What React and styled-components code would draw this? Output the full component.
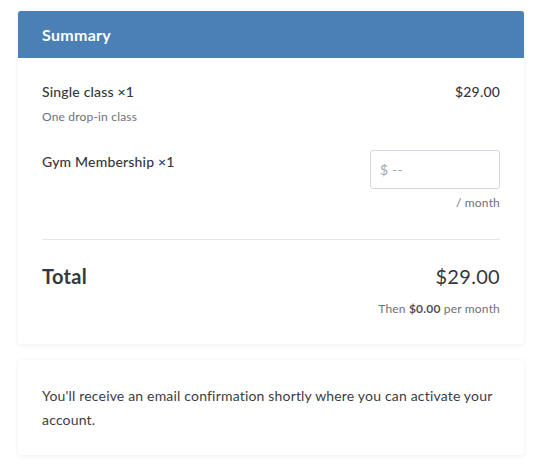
import React from "react";
import styled, { createGlobalStyle } from "styled-components";

const GlobalStyle = createGlobalStyle`
  body {
    margin: 0;
    background: #ffffff;
    font-family: Lato, "Noto Sans", sans-serif;
    color: #34373d;
    letter-spacing: 0.18px;
  }
`;

const Page = styled.div`
  padding: 11px 14px 12px 18px;
  display: flex;
  flex-direction: column;
  gap: 16px;
`;

const Card = styled.section`
  background: #ffffff;
  border-radius: 3px;
  box-shadow: 0 1px 4px rgba(30, 40, 80, 0.08);
  overflow: hidden;
`;

const CardHeader = styled.header`
  height: 47px;
  line-height: 47px;
  padding: 0 24px;
  background: #4a80b6;
  color: #ffffff;
  font-size: 16px;
  font-weight: 700;
  letter-spacing: 0.3px;
`;

const CardBody = styled.div`
  padding: ${({ $pad }) => $pad || "24px 24px 26px"};
`;

const Item = styled.div`
  display: flex;
  justify-content: space-between;
  align-items: flex-start;
  margin-bottom: ${({ $last }) => ($last ? "0" : "24px")};
`;

const ItemName = styled.div`
  font-size: 14px;
  line-height: 20px;
  font-weight: 500;
  margin-top: ${({ $offset }) => $offset || "0"};
`;

const Note = styled.div`
  font-size: 12px;
  line-height: 18px;
  color: #6d717a;
  margin-top: ${({ $gap }) => $gap || "6px"};
  text-align: ${({ $right }) => ($right ? "right" : "left")};
`;

const Price = styled.div`
  font-size: 14px;
  line-height: 20px;
  font-weight: 500;
`;

const PriceField = styled.div`
  display: flex;
  flex-direction: column;
  align-items: flex-end;
`;

const Input = styled.input`
  box-sizing: border-box;
  width: 130px;
  height: 39px;
  border: 1px solid #d5d8de;
  border-radius: 3px;
  padding: 0 9px;
  font-family: inherit;
  font-size: 14px;
  letter-spacing: inherit;
  color: #34373d;
  outline: none;
  &::placeholder {
    color: #a3a7ae;
  }
`;

const Divider = styled.hr`
  border: 0;
  border-top: 1px solid #e4e6ea;
  margin: 27px 0 22px;
`;

const TotalRow = styled.div`
  display: flex;
  justify-content: space-between;
  align-items: baseline;
  font-size: 20px;
  line-height: 28px;
  letter-spacing: 0.3px;
`;

const TotalLabel = styled.span`
  font-weight: 700;
`;

const TotalAmount = styled.span`
  font-weight: 400;
`;

const Strong = styled.span`
  font-weight: 700;
  color: #4f535b;
`;

const Message = styled.p`
  margin: 0;
  font-size: 14px;
  line-height: 24px;
  color: #3a3d44;
`;

export default function App() {
  return (
    <>
      <GlobalStyle />
      <Page>
        <Card>
          <CardHeader>Summary</CardHeader>
          <CardBody>
            <Item>
              <div>
                <ItemName>Single class ×1</ItemName>
                <Note>One drop-in class</Note>
              </div>
              <Price>$29.00</Price>
            </Item>
            <Item $last>
              <ItemName $offset="2px">Gym Membership ×1</ItemName>
              <PriceField>
                <Input placeholder="$ --" />
                <Note $right $gap="5px">/ month</Note>
              </PriceField>
            </Item>
            <Divider />
            <TotalRow>
              <TotalLabel>Total</TotalLabel>
              <TotalAmount>$29.00</TotalAmount>
            </TotalRow>
            <Note $right $gap="10px">
              Then <Strong>$0.00</Strong> per month
            </Note>
          </CardBody>
        </Card>
        <Card>
          <CardBody $pad="24px 24px 23px">
            <Message>
              You'll receive an email confirmation shortly where you can
              activate your account.
            </Message>
          </CardBody>
        </Card>
      </Page>
    </>
  );
}
